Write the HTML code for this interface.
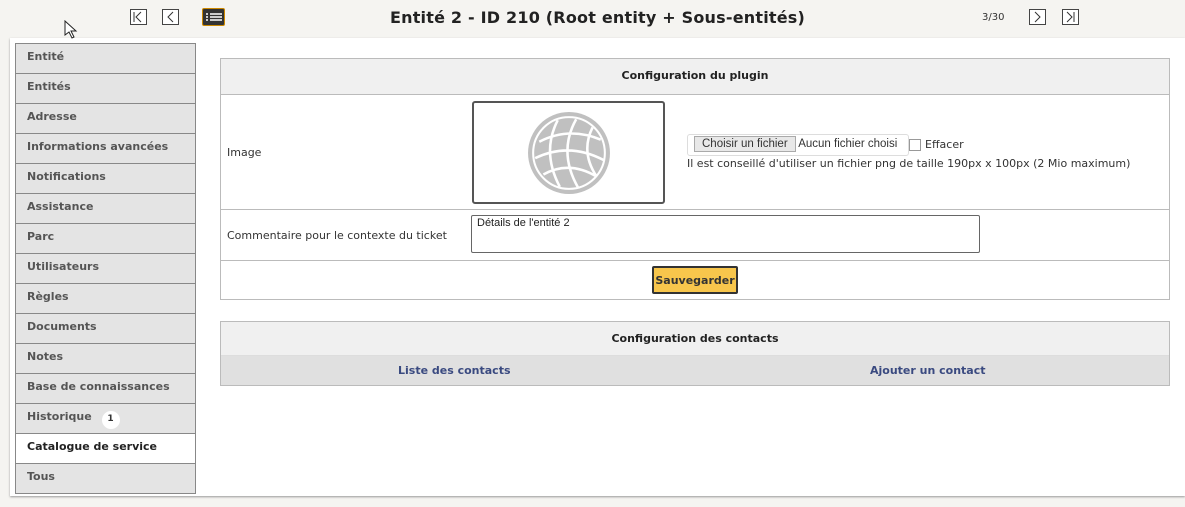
<!DOCTYPE html><html><head><meta charset="utf-8"><style>
*{box-sizing:border-box;margin:0;padding:0}
body{width:1185px;height:507px;background:#f5f4f1;font-family:"DejaVu Sans","Liberation Sans",sans-serif;font-size:11px;color:#333;position:relative;overflow:hidden}
.a{position:absolute}
.nb{position:absolute;top:9px;width:17px;height:16px;border:1px solid #444;background:#fff}
.main{position:absolute;left:10px;top:38px;width:1175px;height:458px;background:#fff;box-shadow:0 1px 2px #999}
.side{position:absolute;left:15px;top:43px;width:181px;border:1px solid #888;border-top:none}
.side div{height:30px;border-top:1px solid #888;background:#e4e4e4;font-weight:bold;color:#555;padding:6px 0 0 11px;font-size:11px}
.side div.on{background:#fff;color:#222}
.box{position:absolute;left:220px;width:950px;border:1px solid #bbb}
</style></head><body>
<div class="nb" style="left:130px"><svg width="15" height="14"><path d="M3 2v10M10 2L5 7l5 5" stroke="#333" fill="none"/></svg></div>
<div class="nb" style="left:162px"><svg width="15" height="14"><path d="M10 2L5 7l5 5" stroke="#333" fill="none"/></svg></div>
<div class="a" style="left:202px;top:8px;width:23px;height:18px;background:#333;border-radius:2px;border:1px solid #c80"><svg width="21" height="16"><g stroke="#fff" stroke-width="1.5"><path d="M3 5h2M7 5h12M3 8h2M7 8h12M3 11h2M7 11h12"/></g></svg></div>
<div class="a" style="left:5px;width:1185px;top:8px;text-align:center;font-weight:bold;font-size:16px;color:#222;letter-spacing:0.2px">Entité 2 - ID 210 (Root entity + Sous-entités)</div>
<div class="a" style="left:982px;top:12px;font-size:10px">3/30</div>
<div class="nb" style="left:1029px"><svg width="15" height="14"><path d="M5 2l5 5-5 5" stroke="#333" fill="none"/></svg></div>
<div class="nb" style="left:1062px"><svg width="15" height="14"><path d="M4 2l5 5-5 5M11 2v10" stroke="#333" fill="none"/></svg></div>
<div class="main"></div>
<div class="side"><div>Entité</div><div>Entités</div><div>Adresse</div><div>Informations avancées</div><div>Notifications</div><div>Assistance</div><div>Parc</div><div>Utilisateurs</div><div>Règles</div><div>Documents</div><div>Notes</div><div>Base de connaissances</div><div>Historique <span style="display:inline-block;width:18px;height:18px;border-radius:9px;background:#fff;color:#333;text-align:center;font-size:9px;line-height:16px;margin-left:6px;vertical-align:-1px">1</span></div><div class="on">Catalogue de service</div><div>Tous</div></div>
<div class="box" style="top:58px;height:242px">
<div style="height:36px;background:#f0f0f0;border-bottom:1px solid #bbb;text-align:center;font-weight:bold;padding-top:10px;color:#222">Configuration du plugin</div>
<div style="height:115px;border-bottom:1px solid #bbb;position:relative">
<div class="a" style="left:6px;top:51px">Image</div>
<div class="a" style="left:251px;top:6px;width:193px;height:103px;border:2px solid #555;border-radius:3px"><svg class="a" style="left:53px;top:8px" width="84" height="84" viewBox="0 0 82 82"><circle cx="41" cy="41" r="40" fill="#c0c0c0"/><circle cx="41" cy="41" r="35" fill="#c0c0c0" stroke="#fff" stroke-width="2"/><g stroke="#fff" stroke-width="2.5" fill="none"><path d="M12 30Q41 15 72 28M8 46Q41 30 75 48M16 62Q41 48 68 64M30 9Q14 40 32 74M48 8Q30 40 50 75M64 16Q52 40 68 64"/></g></svg></div>
<div class="a" style="left:466px;top:39px;width:222px;height:22px;border:1px solid #ddd;border-radius:3px;font-family:'Liberation Sans',sans-serif;font-size:11.5px"><span style="display:inline-block;margin:1px 0 0 6px;border:1px solid #aaa;background:#e8e8e8;padding:1px 7px">Choisir un fichier</span> Aucun fichier choisi</div>
<div class="a" style="left:688px;top:44px;width:12px;height:12px;border:1px solid #999;background:#fff"></div>
<div class="a" style="left:704px;top:43px">Effacer</div>
<div class="a" style="left:466px;top:62px">Il est conseillé d'utiliser un fichier png de taille 190px x 100px (2 Mio maximum)</div>
</div>
<div style="height:51px;border-bottom:1px solid #bbb;position:relative">
<div class="a" style="left:6px;top:19px">Commentaire pour le contexte du ticket</div>
<div class="a" style="left:250px;top:5px;width:509px;height:38px;border:1px solid #666;border-radius:2px;font-family:'Liberation Sans',sans-serif;font-size:11px;padding:1px 5px;color:#222">Détails de l'entité 2</div>
</div>
<div style="position:relative;height:38px"><div class="a" style="left:431px;top:5px;width:86px;height:28px;background:#f8c64c;border:2px solid #333;border-radius:2px;text-align:center;font-weight:bold;font-size:11px;padding-top:6px;color:#333">Sauvegarder</div></div>
</div>
<div class="box" style="top:321px;height:65px">
<div style="height:34px;background:#f0f0f0;border-bottom:1px solid #ddd;text-align:center;font-weight:bold;padding-top:10px;color:#222">Configuration des contacts</div>
<div style="height:29px;background:#e0e0e0;position:relative;font-weight:bold;color:#3a4a80"><span class="a" style="left:177px;top:8px">Liste des contacts</span><span class="a" style="left:649px;top:8px">Ajouter un contact</span></div>
</div>
<svg class="a" style="left:64px;top:20px" width="14" height="20"><path d="M1 1v14l4-3 3 6 2-1-3-6h5z" fill="#fff" stroke="#222"/></svg>
</body></html>
